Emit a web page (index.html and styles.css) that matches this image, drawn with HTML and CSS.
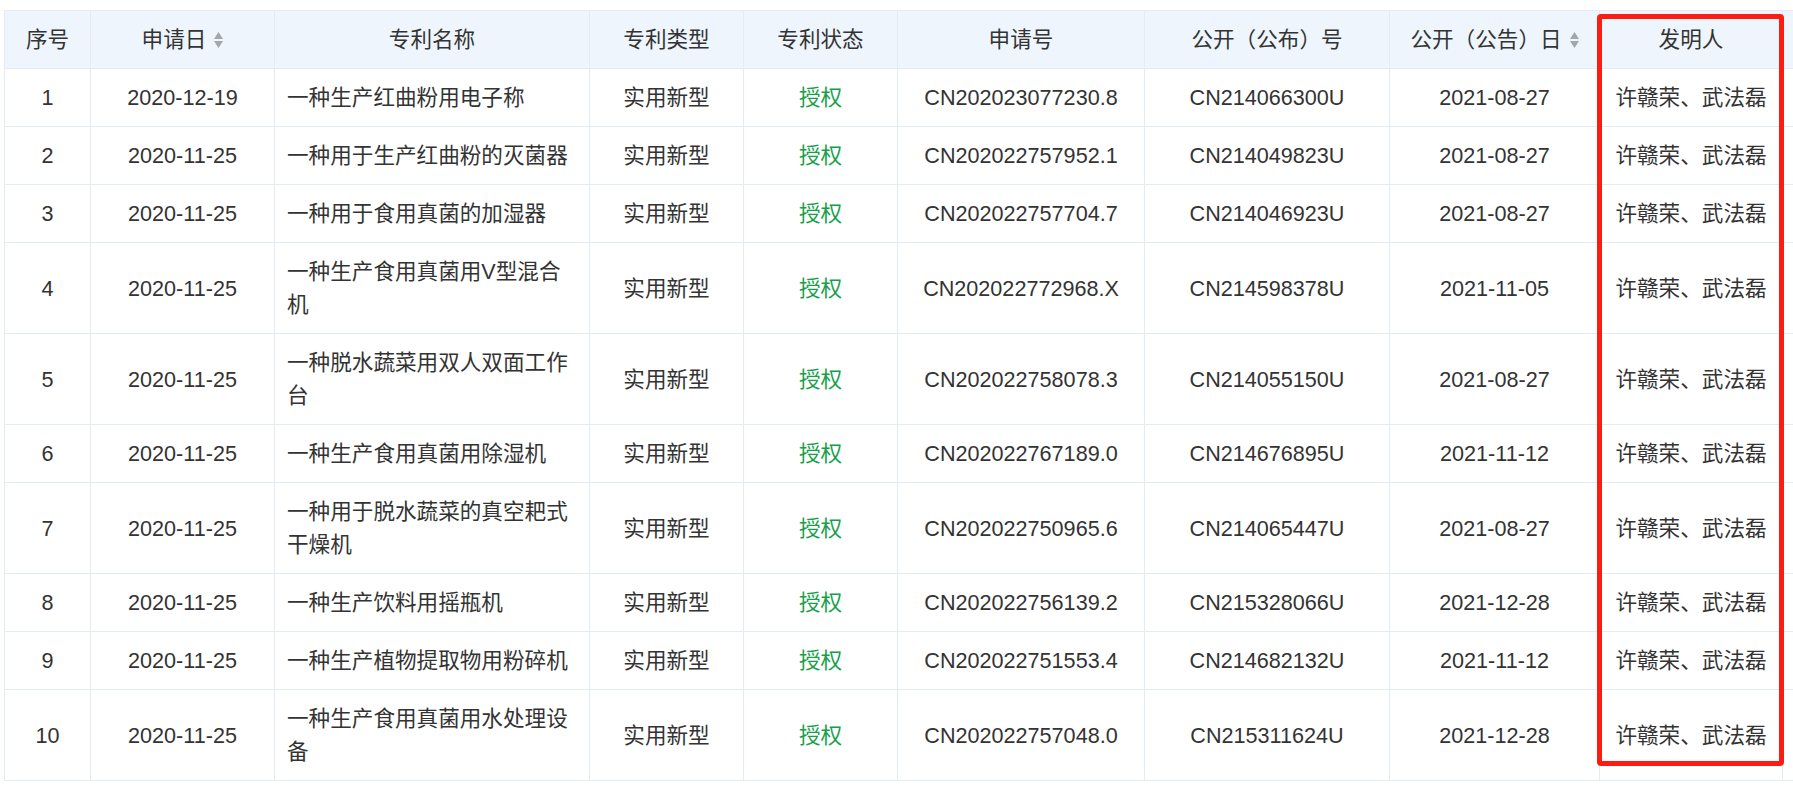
FILE: index.html
```html
<!DOCTYPE html>
<html lang="zh-CN">
<head>
<meta charset="utf-8">
<title>专利列表</title>
<link rel="stylesheet" href="styles.css">
</head>
<body>
<div class="wrap">
  <table class="grid">
    <colgroup>
      <col class="c-idx"><col class="c-date"><col class="c-name"><col class="c-type"><col class="c-status"><col class="c-appno"><col class="c-pubno"><col class="c-pubdate"><col class="c-inv"><col class="c-more">
    </colgroup>
    <thead>
      <tr>
        <th>序号</th>
        <th><span class="sortable">申请日<svg class="sort" viewBox="0 0 9 16" width="9" height="16"><path d="M4.5 0 L9 7 L0 7 Z"/><path d="M0 9 L9 9 L4.5 16 Z"/></svg></span></th>
        <th>专利名称</th>
        <th>专利类型</th>
        <th>专利状态</th>
        <th>申请号</th>
        <th>公开（公布）号</th>
        <th><span class="sortable">公开（公告）日<svg class="sort" viewBox="0 0 9 16" width="9" height="16"><path d="M4.5 0 L9 7 L0 7 Z"/><path d="M0 9 L9 9 L4.5 16 Z"/></svg></span></th>
        <th>发明人</th>
        <th></th>
      </tr>
    </thead>
    <tbody>
      <tr><td>1</td><td>2020-12-19</td><td class="name">一种生产红曲粉用电子称</td><td>实用新型</td><td class="ok">授权</td><td>CN202023077230.8</td><td>CN214066300U</td><td>2021-08-27</td><td>许赣荣、武法磊</td><td></td></tr>
      <tr><td>2</td><td>2020-11-25</td><td class="name">一种用于生产红曲粉的灭菌器</td><td>实用新型</td><td class="ok">授权</td><td>CN202022757952.1</td><td>CN214049823U</td><td>2021-08-27</td><td>许赣荣、武法磊</td><td></td></tr>
      <tr><td>3</td><td>2020-11-25</td><td class="name">一种用于食用真菌的加湿器</td><td>实用新型</td><td class="ok">授权</td><td>CN202022757704.7</td><td>CN214046923U</td><td>2021-08-27</td><td>许赣荣、武法磊</td><td></td></tr>
      <tr><td>4</td><td>2020-11-25</td><td class="name">一种生产食用真菌用V型混合机</td><td>实用新型</td><td class="ok">授权</td><td>CN202022772968.X</td><td>CN214598378U</td><td>2021-11-05</td><td>许赣荣、武法磊</td><td></td></tr>
      <tr><td>5</td><td>2020-11-25</td><td class="name">一种脱水蔬菜用双人双面工作台</td><td>实用新型</td><td class="ok">授权</td><td>CN202022758078.3</td><td>CN214055150U</td><td>2021-08-27</td><td>许赣荣、武法磊</td><td></td></tr>
      <tr><td>6</td><td>2020-11-25</td><td class="name">一种生产食用真菌用除湿机</td><td>实用新型</td><td class="ok">授权</td><td>CN202022767189.0</td><td>CN214676895U</td><td>2021-11-12</td><td>许赣荣、武法磊</td><td></td></tr>
      <tr><td>7</td><td>2020-11-25</td><td class="name">一种用于脱水蔬菜的真空耙式干燥机</td><td>实用新型</td><td class="ok">授权</td><td>CN202022750965.6</td><td>CN214065447U</td><td>2021-08-27</td><td>许赣荣、武法磊</td><td></td></tr>
      <tr><td>8</td><td>2020-11-25</td><td class="name">一种生产饮料用摇瓶机</td><td>实用新型</td><td class="ok">授权</td><td>CN202022756139.2</td><td>CN215328066U</td><td>2021-12-28</td><td>许赣荣、武法磊</td><td></td></tr>
      <tr><td>9</td><td>2020-11-25</td><td class="name">一种生产植物提取物用粉碎机</td><td>实用新型</td><td class="ok">授权</td><td>CN202022751553.4</td><td>CN214682132U</td><td>2021-11-12</td><td>许赣荣、武法磊</td><td></td></tr>
      <tr><td>10</td><td>2020-11-25</td><td class="name">一种生产食用真菌用水处理设备</td><td>实用新型</td><td class="ok">授权</td><td>CN202022757048.0</td><td>CN215311624U</td><td>2021-12-28</td><td>许赣荣、武法磊</td><td></td></tr>
    </tbody>
  </table>
  <div class="highlight"></div>
</div>
</body>
</html>
```

FILE: styles.css
```css
html, body {
  margin: 0;
  padding: 0;
  background: #ffffff;
}

body {
  font-family: "Liberation Sans", "Noto Sans CJK SC", sans-serif;
  font-size: 21.6px;
  color: #333333;
}

.wrap {
  position: relative;
  margin: 10px 0 0 4px;
  overflow: hidden;
  height: 781px;
}

.grid {
  table-layout: fixed;
  border-collapse: collapse;
  width: 1979px;
}

.c-idx { width: 86px; }
.c-date { width: 184px; }
.c-name { width: 315px; }
.c-type { width: 154px; }
.c-status { width: 154px; }
.c-appno { width: 247px; }
.c-pubno { width: 245px; }
.c-pubdate { width: 210px; }
.c-inv { width: 183px; }
.c-more { width: 200px; }

.grid th,
.grid td {
  border: 1px solid #e3ebf4;
  padding: 12px 4px;
  line-height: 33px;
  text-align: center;
  font-weight: normal;
  vertical-align: middle;
  white-space: normal;
}

.grid th {
  background: #eef5fc;
  color: #333333;
}

.grid td.name {
  text-align: left;
  padding-left: 12px;
  padding-right: 12px;
}

.grid td.ok {
  color: #17a04a;
}

.sortable {
  display: inline-flex;
  align-items: center;
  gap: 8px;
}

.sort {
  fill: #a3a6ab;
  display: block;
}

.highlight {
  position: absolute;
  left: 1593px;
  top: 4px;
  width: 187px;
  height: 752px;
  box-sizing: border-box;
  border: 5px solid #fb1d12;
  border-radius: 4px;
  pointer-events: none;
}
```
